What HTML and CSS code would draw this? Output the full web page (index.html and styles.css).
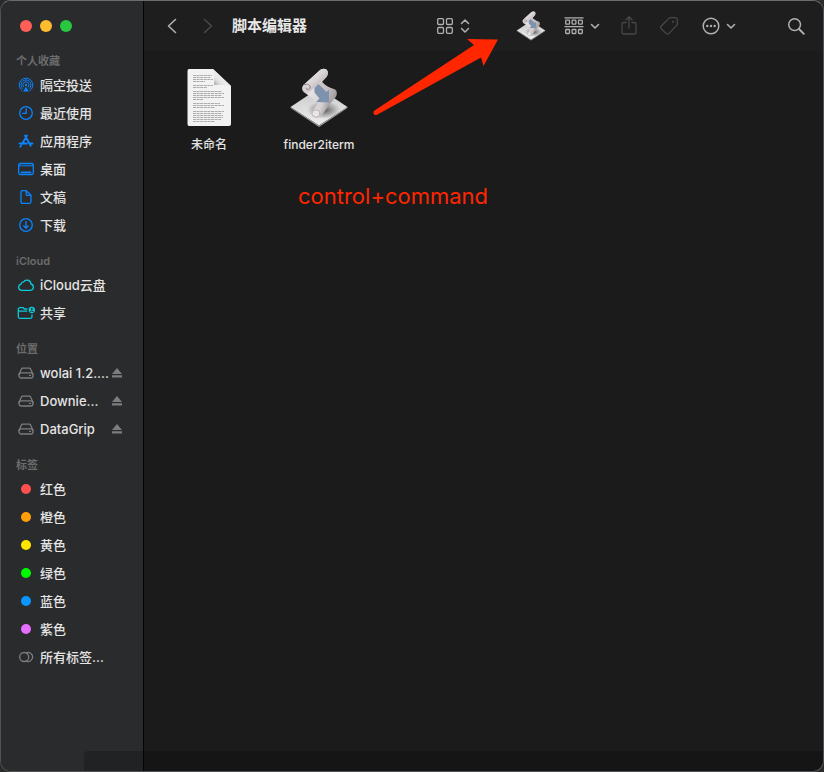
FILE: index.html
```html
<!DOCTYPE html>
<html lang="zh-CN">
<head>
<meta charset="utf-8">
<meta name="viewport" content="width=device-width, initial-scale=1">
<title>脚本编辑器</title>
<link rel="stylesheet" href="styles.css">
</head>
<body>
<svg class="defs" aria-hidden="true">
  <defs>
    <linearGradient id="paper" x1="0" y1="0" x2="0" y2="1">
      <stop offset="0" stop-color="#c8c8c8"/><stop offset="1" stop-color="#eeeeee"/>
    </linearGradient>
    <linearGradient id="roll" x1="0" y1="0" x2="1" y2="1">
      <stop offset="0" stop-color="#f4f0f1"/><stop offset=".5" stop-color="#d9d3d5"/><stop offset="1" stop-color="#9a9496"/>
    </linearGradient>
    <linearGradient id="sheet" x1="0" y1="0" x2="1" y2="0.5">
      <stop offset="0" stop-color="#b3adaf"/><stop offset=".4" stop-color="#e6e1e3"/><stop offset=".75" stop-color="#d5cfd1"/><stop offset="1" stop-color="#8f898b"/>
    </linearGradient>
    <radialGradient id="shade" cx=".5" cy=".5" r=".5">
      <stop offset="0" stop-color="#444" stop-opacity=".9"/><stop offset="1" stop-color="#666" stop-opacity="0"/>
    </radialGradient>
    <linearGradient id="fold" x1="0" y1="1" x2="1" y2="0">
      <stop offset="0" stop-color="#9c9c9c"/><stop offset=".3" stop-color="#e4e4e4"/><stop offset="1" stop-color="#ffffff"/>
    </linearGradient>
    <symbol id="script" viewBox="0 0 60 60">
      <path d="M1.500 39 30 20 58.500 39 30 57.500z" fill="url(#paper)"/>
      <path d="M1.500 39 30 57.500 58.500 39v1L30 59 1.500 40z" fill="#9b9b9b"/>
      <ellipse cx="35" cy="42" rx="17" ry="9" fill="url(#shade)"/>
      <path d="M14.500 17 30 3C33 0 37 0 38.500 3c.8 2 .3 4-1 6L33 14c4 4 8 6 12 7 3 1 3.500 4 2 7L33 47c-2 3-7 4-9 1-2-2-1-5 1-7l4-6c-4-3-8-7-13-10-3-2-4-5-1.500-8z" fill="url(#sheet)"/>
      <path d="M14.500 17 30 3c3-3 7-3 8.500 0 .8 2 .3 4-1 6L22 22.500c-2 2-5 1-6.500-.5-2-1.500-2-3.500-1-5z" fill="url(#roll)"/>
      <path d="M15 17c3-2 7 0 6 3-1 2-4 2-4 0" fill="none" stroke="#857f81" stroke-width="1"/>
      <path d="M33 14c4 4 8 7 12 8 3 1 3.500 4 2 7l-5 6c1-5-6-11-14-17z" fill="#b5afb1" opacity=".5"/>
      <path d="m25.500 20 4-4 8 8 2.500-2.500v13L27 34l3.500-3.500-5-6z" fill="#7d92ad"/>
      <ellipse cx="27" cy="45.500" rx="4" ry="3.600" fill="#e9e5e6" stroke="#aaa4a6" stroke-width=".7"/>
    </symbol>
    <symbol id="drive" viewBox="0 0 18 18">
      <path d="M2 10.500 4.300 5.200q.4-1 1.500-1h6.400q1.100 0 1.500 1L16 10.500"/><rect x="2" y="8.800" width="14" height="5.200" rx="2.200"/><path d="M12.500 11.400h1"/>
    </symbol>
    <symbol id="eject" viewBox="0 0 12 12"><path d="M6 1 11 7H1zM1 8.300h10v2.200H1z" fill="currentColor" stroke="none"/></symbol>
    <symbol id="chevron" viewBox="0 0 10 16"><path d="m1.500 6.500 3.500 3.500 3.500-3.500" stroke-width="1.600"/></symbol>
  </defs>
</svg>

<div class="window">
  <aside class="sidebar">
    <div class="lights">
      <button class="light close" aria-label="关闭"></button>
      <button class="light minimize" aria-label="最小化"></button>
      <button class="light zoom" aria-label="缩放"></button>
    </div>

    <nav class="section">
      <h2>个人收藏</h2>
      <a class="row blue" href="#"><svg viewBox="0 0 18 18" class="icon"><g stroke-width="1"><path d="M5.200 14.800A6.900 6.900 0 1 1 12.800 14.800"/><path d="M5.600 12.600A5 5 0 1 1 12.400 12.600"/><path d="M6.600 10.900A3.100 3.100 0 1 1 11.400 10.900"/></g><circle cx="9" cy="9" r="1.200" fill="currentColor" stroke="none"/><path d="m9 10.500 2.800 5H6.200z" fill="currentColor" stroke="none"/></svg><span>隔空投送</span></a>
      <a class="row blue" href="#"><svg viewBox="0 0 18 18" class="icon"><circle cx="9" cy="9" r="6.300"/><path d="M9.200 4.800V9.300H5.500"/></svg><span>最近使用</span></a>
      <a class="row blue" href="#"><svg viewBox="0 0 18 18" class="icon"><path d="M10 3.500 5 12M8 3.500l5.700 10.300M3.300 14.800l.7-1.200M2.500 11.500H10M12.700 11.500h2.800" stroke-width="1.800"/></svg><span>应用程序</span></a>
      <a class="row blue" href="#"><svg viewBox="0 0 18 18" class="icon"><rect x="1.700" y="3.500" width="14.600" height="11" rx="1.500"/><path d="M2 5.800h14" stroke-width="1"/><path d="M4.500 12.300h9" stroke-width="1.700"/></svg><span>桌面</span></a>
      <a class="row blue" href="#"><svg viewBox="0 0 18 18" class="icon"><path d="M5.500 2.700h3.800l4.700 4.600v6.500q0 1.500-1.500 1.500h-7Q4 15.300 4 13.800V4.200q0-1.500 1.500-1.500zM9.200 3v3.200q0 1.200 1.200 1.200h3.400"/></svg><span>文稿</span></a>
      <a class="row blue" href="#"><svg viewBox="0 0 18 18" class="icon"><circle cx="9" cy="9" r="6.300"/><path d="M9 5.500v6.500M6.700 9.900 9 12.200l2.300-2.300"/></svg><span>下载</span></a>
    </nav>

    <nav class="section">
      <h2>iCloud</h2>
      <a class="row teal" href="#"><svg viewBox="0 0 18 18" class="icon"><path d="M4.500 14.300a3.100 3.100 0 0 1-.4-6.100 1.900 1.900 0 0 1 2.300-2 4 4 0 0 1 7.500 1.800 3.200 3.200 0 0 1-.4 6.300z"/></svg><span>iCloud云盘</span></a>
      <a class="row teal" href="#"><svg viewBox="0 0 18 18" class="icon"><path d="M10 5H7.300L6.200 3.700H3Q1.300 3.700 1.300 5.400v7.400q0 1.500 1.500 1.500h10.700q1.500 0 1.500-1.500v-2M1.500 7.200h8.300"/><circle cx="14.800" cy="6" r="3.200" fill="currentColor" stroke="none"/><circle cx="14.800" cy="5" r="1" fill="#2a2b2c" stroke="none"/><path d="M13 7.800q1.800-2 3.600 0" stroke="#2a2b2c" stroke-width="1"/></svg><span>共享</span></a>
    </nav>

    <nav class="section">
      <h2>位置</h2>
      <div class="row gray"><svg class="icon"><use href="#drive"/></svg><a href="#">wolai 1.2....</a><button class="eject" aria-label="推出 wolai"><svg><use href="#eject"/></svg></button></div>
      <div class="row gray"><svg class="icon"><use href="#drive"/></svg><a href="#">Downie...</a><button class="eject" aria-label="推出 Downie"><svg><use href="#eject"/></svg></button></div>
      <div class="row gray"><svg class="icon"><use href="#drive"/></svg><a href="#">DataGrip</a><button class="eject" aria-label="推出 DataGrip"><svg><use href="#eject"/></svg></button></div>
    </nav>

    <nav class="section">
      <h2>标签</h2>
      <a class="row" href="#"><i class="dot red"></i><span>红色</span></a>
      <a class="row" href="#"><i class="dot orange"></i><span>橙色</span></a>
      <a class="row" href="#"><i class="dot yellow"></i><span>黄色</span></a>
      <a class="row" href="#"><i class="dot green"></i><span>绿色</span></a>
      <a class="row" href="#"><i class="dot azure"></i><span>蓝色</span></a>
      <a class="row" href="#"><i class="dot purple"></i><span>紫色</span></a>
      <a class="row gray" href="#"><svg viewBox="0 0 18 18" class="icon"><circle cx="7.200" cy="9" r="4.500"/><path d="M9.300 4.900a4.500 4.500 0 1 1 0 8.200"/></svg><span>所有标签...</span></a>
    </nav>
  </aside>

  <main class="main">
    <header class="toolbar">
      <button class="nav" aria-label="后退"><svg width="12" height="18" viewBox="0 0 12 18"><path d="M9.500 2.500 2.500 9l7 6.500" stroke-width="1.600"/></svg></button>
      <button class="nav dim" aria-label="前进"><svg width="12" height="18" viewBox="0 0 12 18"><path d="m2.500 2.500 7 6.500-7 6.500" stroke-width="1.600"/></svg></button>
      <h1>脚本编辑器</h1>
      <div class="tools">
        <button class="tool wide view" aria-label="显示方式"><svg width="18" height="18" viewBox="0 0 18 18"><rect x="1.700" y="1.700" width="5.800" height="5.800" rx="1"/><rect x="10.500" y="1.700" width="5.800" height="5.800" rx="1"/><rect x="1.700" y="10.500" width="5.800" height="5.800" rx="1"/><rect x="10.500" y="10.500" width="5.800" height="5.800" rx="1"/></svg><svg width="10" height="16" viewBox="0 0 10 16"><path d="M1.500 5.500 5 2l3.500 3.500M1.500 10.500 5 14l3.500-3.500" stroke-width="1.500"/></svg></button>
        <button class="tool app" aria-label="脚本编辑器"><svg width="30" height="30"><use href="#script"/></svg></button>
        <button class="tool wide" aria-label="分组"><svg width="20" height="18" viewBox="0 0 20 18"><path d="M1 .9h18M1 9.700h18"/><rect x="1.700" y="3.200" width="3.800" height="4" rx=".7"/><rect x="8.100" y="3.200" width="3.800" height="4" rx=".7"/><rect x="14.500" y="3.200" width="3.800" height="4" rx=".7"/><rect x="1.700" y="12.500" width="3.800" height="4" rx=".7"/><rect x="8.100" y="12.500" width="3.800" height="4" rx=".7"/><rect x="14.500" y="12.500" width="3.800" height="4" rx=".7"/></svg><svg width="10" height="16"><use href="#chevron"/></svg></button>
        <button class="tool dim" aria-label="共享"><svg width="18" height="22" viewBox="0 0 18 22"><path d="M6 7.500H3.500Q2 7.500 2 9v8.500Q2 19 3.500 19h11q1.500 0 1.500-1.500V9q0-1.500-1.500-1.500H12M9 13V2M6 4.700l3-3 3 3"/></svg></button>
        <button class="tool dim" aria-label="标签"><svg width="20" height="20" viewBox="0 0 20 20"><path d="M11.500 1.700h5q1.800 0 1.800 1.800v4.300q0 1-.8 1.800l-7.800 8q-1.200 1.200-2.400 0l-5.200-5q-1.200-1.200 0-2.400l7.700-7.800q.7-.7 1.700-.7z"/><circle cx="14" cy="5.800" r="1.100" fill="currentColor" stroke="none"/></svg></button>
        <button class="tool more" aria-label="更多"><svg width="18" height="18" viewBox="0 0 18 18"><circle cx="9" cy="9" r="7.800" stroke-width="1.500"/><g fill="currentColor" stroke="none"><circle cx="5.300" cy="9" r="1.200"/><circle cx="9" cy="9" r="1.200"/><circle cx="12.700" cy="9" r="1.200"/></g></svg><svg width="10" height="16"><use href="#chevron"/></svg></button>
        <button class="tool search" aria-label="搜索"><svg width="18" height="18" viewBox="0 0 18 18"><circle cx="7.600" cy="7.600" r="5.900" stroke-width="1.500"/><path d="m12 12 4.800 4.800" stroke-width="1.900"/></svg></button>
      </div>
    </header>

    <section class="files">
      <figure class="file">
        <svg width="60" height="60" viewBox="0 0 60 60">
          <path d="M10 1h24l18 17v38q0 2-2 2H10q-1.500 0-1.500-2V3q0-2 1.500-2z" fill="#f2f2f2"/>
          <g class="lines">
            <path d="M14 7.500h19M14 9.500h18M14 11.500h20M14 13.500h12"/>
            <path d="M14 17.500h20M14 19.500h14"/>
            <path d="M14 23.500h29M14 25.500h31M14 27.500h29M14 29.500h31M14 31.500h10"/>
            <path d="M14 35.500h27M14 37.500h31M14 39.500h22"/>
            <path d="M14 43.500h31M14 45.500h29M14 47.500h30M14 49.500h30M14 51.500h28M14 53.500h22"/>
          </g>
          <path d="M34 1q2 8 1 16 8-1 17 1z" fill="url(#fold)"/>
        </svg>
        <figcaption>未命名</figcaption>
      </figure>
      <figure class="file">
        <svg width="60" height="60"><use href="#script"/></svg>
        <figcaption>finder2iterm</figcaption>
      </figure>
    </section>

    <svg class="arrow" width="128" height="80" viewBox="0 0 128 80" aria-hidden="true"><path d="M4.500 72.500 104 7 97 1l31 .5L113.500 28 111 19.500 7.500 76.500Q4.500 78 3.500 75.500 3 73.500 4.500 72.500z"/></svg>
    <p class="note">control+command</p>
  </main>
  <div class="shelf" aria-hidden="true"></div>
</div>
</body>
</html>
```
FILE: styles.css
```css
* {
  box-sizing: border-box;
}

body {
  margin: 0;
  background: #2b2b2b;
  color: #e4e4e4;
  font-family: Inter, "Noto Sans CJK SC", sans-serif;
  font-size: 13px;
}

h1, h2, p, figure {
  margin: 0;
}

a {
  color: inherit;
  text-decoration: none;
}

button {
  padding: 0;
  border: 0;
  background: none;
  color: inherit;
  font: inherit;
}

svg {
  display: block;
  fill: none;
  stroke: currentColor;
  stroke-width: 1.3;
  stroke-linecap: round;
  stroke-linejoin: round;
}

.file svg, .app svg {
  stroke: none;
}

.defs {
  position: absolute;
  width: 0;
  height: 0;
}

.window {
  position: relative;
  display: flex;
  min-height: 100vh;
  overflow: hidden;
  border: 1px solid #505152;
  border-top-color: #6a6b6b;
  border-radius: 11px;
  background: #1b1b1b;
}

/* Sidebar */

.sidebar {
  flex: none;
  width: 143px;
  border-right: 1px solid #050505;
  background: #2a2b2c;
}

.lights {
  display: flex;
  gap: 8px;
  padding: 19px 19px 20px;
}

.light {
  width: 12px;
  height: 12px;
  border-radius: 50%;
}

.close { background: #ff5f57; }
.minimize { background: #febc2e; }
.zoom { background: #28c840; }

.section {
  margin-bottom: 13px;
}

h2 {
  padding-left: 15px;
  color: #6b6c6d;
  font-size: 11px;
  font-weight: 600;
  line-height: 19px;
}

.row {
  display: flex;
  align-items: center;
  gap: 5px;
  height: 28px;
  padding: 0 20px 0 16px;
  font-weight: 500;
  line-height: 28px;
  white-space: nowrap;
}

.row span, .row a {
  color: #e4e4e4;
}

.row a {
  flex: 1;
  min-width: 0;
}

.icon {
  flex: none;
  width: 18px;
  height: 18px;
}

.blue { color: #0a84ff; }
.teal { color: #0cc8d8; }
.gray { color: #7c7d7e; }

.eject svg {
  width: 12px;
  height: 12px;
}

.dot {
  width: 10px;
  height: 10px;
  margin: 0 4px;
  border-radius: 50%;
}

.red { background: #ff5050; }
.orange { background: #ff9f0a; }
.yellow { background: #ffe600; }
.green { background: #00f900; }
.azure { background: #0a96ff; }
.purple { background: #e66eff; }

/* Main pane */

.main {
  position: relative;
  flex: 1;
  min-width: 0;
}

.toolbar {
  display: flex;
  align-items: center;
  height: 50px;
  padding: 0 11px 0 10px;
  background: #1e1e1e;
  color: #b0b0b0;
}

.nav {
  display: flex;
  justify-content: center;
  width: 36px;
}

.toolbar .dim {
  color: #484848;
}

h1 {
  margin-left: 6px;
  color: #e8e8e8;
  font-size: 15px;
  font-weight: 700;
  line-height: 20px;
  white-space: nowrap;
}

.tools {
  display: flex;
  align-items: center;
  gap: 18px;
  margin-left: auto;
}

.tool {
  display: flex;
  align-items: center;
  justify-content: center;
  width: 22px;
  height: 32px;
}

.wide {
  justify-content: flex-end;
  gap: 6px;
  width: 36px;
}

.view {
  margin-right: 28px;
}

.app {
  width: 30px;
}

.more {
  justify-content: flex-end;
  gap: 6px;
  width: 38px;
}

.search {
  width: 32px;
  margin-left: 26px;
}

.files {
  display: flex;
  padding: 17px 10px;
}

.file {
  display: flex;
  flex-direction: column;
  align-items: center;
  gap: 7px;
  width: 110px;
}

.file .lines {
  stroke: #999;
  stroke-width: 0.8;
  stroke-linecap: butt;
  stroke-dasharray: 3 0.6;
}

figcaption {
  font-size: 12px;
  font-weight: 500;
  line-height: 20px;
}

/* Annotations laid over the window */

.arrow {
  position: absolute;
  top: 37px;
  left: 226px;
  fill: #ff2600;
  stroke: none;
}

.note {
  position: absolute;
  top: 180px;
  left: 154px;
  color: #ff2600;
  font-size: 22px;
  line-height: 30px;
}

.shelf {
  position: absolute;
  right: 0;
  bottom: 0;
  left: 83px;
  height: 20px;
  border-top-left-radius: 4px;
  background: rgba(0, 0, 0, 0.2);
}
```
